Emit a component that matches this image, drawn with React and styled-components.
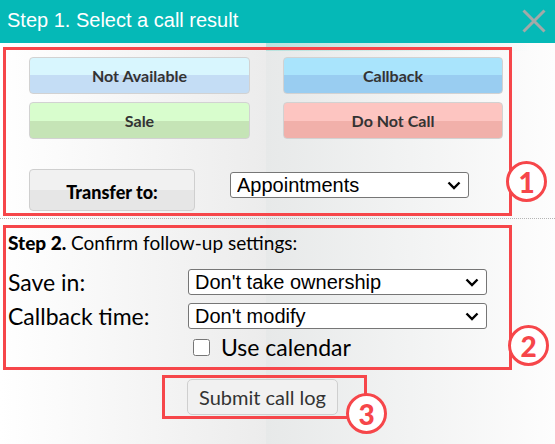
import styled, { createGlobalStyle } from "styled-components";

const Global = createGlobalStyle`
  html, body { margin: 0; padding: 0; }
  body { font-family: "Lato", "Liberation Sans", sans-serif; }
`;

const chevron =
  "url(\"data:image/svg+xml;utf8,<svg xmlns='http://www.w3.org/2000/svg' width='14' height='9' viewBox='0 0 14 9'><path d='M1.5 1.5 L7 7 L12.5 1.5' fill='none' stroke='black' stroke-width='2.4'/></svg>\")";

const Page = styled.div`
  width: 555px;
  height: 444px;
  overflow: hidden;
  background:
    linear-gradient(to right, rgba(180, 226, 222, 0) 0, rgba(180, 226, 222, 0) 266px, rgba(180, 226, 222, 0.9) 266px, rgba(200, 236, 232, 0.5) 420px, rgba(255, 255, 255, 0) 530px) 0 43px / 555px 8px no-repeat,
    linear-gradient(to right, #ffffff 0, #ececec 266px, #e7e9e9 266px, #fdfdfd 555px);
`;

const Header = styled.div`
  height: 43px;
  background: #05b9b7;
  display: flex;
  align-items: center;
  justify-content: space-between;
  padding: 0 9px 0 7px;
  box-sizing: border-box;
`;

const Title = styled.h1`
  margin: 0;
  font-family: "Liberation Sans", Arial, sans-serif;
  font-weight: normal;
  font-size: 20px;
  color: #fff;
  padding-bottom: 2px;
`;

const Close = styled.button`
  border: 0;
  background: none;
  padding: 0;
  width: 24px;
  height: 24px;
  margin-bottom: 2px;
  display: flex;
`;

const Box = styled.section`
  position: relative;
  margin: ${p => p.$margin};
  width: ${p => p.$width}px;
  height: ${p => (p.$height ? `${p.$height}px` : "auto")};
  border: 3px solid #f6464a;
  box-sizing: border-box;
  padding: ${p => p.$pad};
`;

const Badge = styled.div`
  position: absolute;
  left: ${p => p.$left}px;
  top: ${p => p.$top}px;
  width: 41px;
  height: 41px;
  box-sizing: border-box;
  border: 3px solid #f6464a;
  border-radius: 50%;
  background: #fff;
  color: #f6464a;
  font-family: "Lato", sans-serif;
  font-weight: 900;
  font-size: 28px;
  display: flex;
  align-items: center;
  justify-content: center;
  line-height: 1;
`;

const ButtonGrid = styled.div`
  display: grid;
  grid-template-columns: 221px 220px;
  column-gap: 33px;
  row-gap: 8px;
`;

const ResultButton = styled.button`
  height: 37px;
  border: 1px solid #d2d2d2;
  border-radius: 4px;
  background: linear-gradient(to bottom, ${p => p.$top} 0, ${p => p.$top} 50%, ${p => p.$bottom} 50%, ${p => p.$bottom} 100%);
  font-family: "Lato", sans-serif;
  font-weight: bold;
  font-size: 16px;
  color: #333;
  padding: 0;
`;

const TransferRow = styled.div`
  display: flex;
  align-items: flex-start;
  gap: 35px;
  margin-top: 30px;
`;

const TransferButton = styled.button`
  width: 166px;
  height: 42px;
  border: 1px solid #cfcfcf;
  border-radius: 4px;
  background: linear-gradient(to bottom, #f1f1f1 0, #f1f1f1 50%, #e6e6e6 50%, #e6e6e6 100%);
  font-family: "Lato", sans-serif;
  font-weight: 900;
  font-size: 18px;
  color: #000;
  padding: 3px 0 0;
`;

const Select = styled.select`
  appearance: none;
  width: ${p => p.$width}px;
  height: ${p => p.$height}px;
  margin-top: ${p => p.$mt || 0}px;
  font-family: "Liberation Sans", Arial, sans-serif;
  font-size: 20px;
  color: #000;
  background: #fff ${chevron} no-repeat right 7px center / 14px 9px;
  border: 1px solid #767676;
  border-radius: 3px;
  padding: 0 24px 0 6px;
`;

const Separator = styled.hr`
  margin: 2px 0 6px;
  border: 0;
  border-top: 1px dotted #b4b4b4;
  height: 0;
`;

const StepLine = styled.p`
  margin: 0;
  font-size: 19px;
  line-height: 22px;
  color: #000;
  b { font-weight: 900; }
`;

const FieldRow = styled.div`
  display: grid;
  grid-template-columns: 180px 299px;
  align-items: center;
  margin-top: ${p => p.$mt}px;
`;

const Label = styled.label`
  font-size: 23px;
  line-height: 26px;
  color: #000;
`;

const CheckRow = styled.label`
  display: flex;
  align-items: center;
  gap: 11px;
  margin: 4px 0 0 185px;
  font-size: 23px;
  line-height: 28px;
  color: #000;

  input {
    width: 17px;
    height: 17px;
    margin: 0;
  }
`;

const SubmitButton = styled.button`
  width: 151px;
  height: 36px;
  border: 1px solid #cfcfcf;
  border-radius: 5px;
  background: #f1f1f1;
  font-family: "Lato", sans-serif;
  font-size: 20px;
  color: #333;
  padding: 0;
`;

const results = [
  { label: "Not Available", top: "#d8f6fe", bottom: "#c4ddf5" },
  { label: "Callback", top: "#a9e4fc", bottom: "#99cdf1" },
  { label: "Sale", top: "#d8fdcd", bottom: "#c5e4b6" },
  { label: "Do Not Call", top: "#fdc5c1", bottom: "#f1b0aa" },
];

export default function App() {
  return (
    <Page>
      <Global />
      <Header>
        <Title>Step 1. Select a call result</Title>
        <Close aria-label="Close">
          <svg width="24" height="24" viewBox="0 0 24 24">
            <path d="M1.5 1.5 L22.5 22.5 M22.5 1.5 L1.5 22.5" stroke="#a2a9a8" strokeWidth="3" />
          </svg>
        </Close>
      </Header>

      <Box $margin="4px 0 0 3px" $width={509} $pad="7px 6px 2px 23px">
        <ButtonGrid>
          {results.map(r => (
            <ResultButton key={r.label} $top={r.top} $bottom={r.bottom}>
              {r.label}
            </ResultButton>
          ))}
        </ButtonGrid>
        <TransferRow>
          <TransferButton>Transfer to:</TransferButton>
          <Select $width={239} $height={26} $mt={3} defaultValue="Appointments">
            <option>Appointments</option>
          </Select>
        </TransferRow>
        <Badge $left={500} $top={111}>1</Badge>
      </Box>

      <Separator />

      <Box $margin="0 0 0 3px" $width={509} $height={145} $pad="4px 4px 0 2px">
        <StepLine><b>Step 2.</b> Confirm follow-up settings:</StepLine>
        <FieldRow $mt={15}>
          <Label>Save in:</Label>
          <Select $width={299} $height={26} defaultValue="own">
            <option value="own">Don't take ownership</option>
          </Select>
        </FieldRow>
        <FieldRow $mt={8}>
          <Label>Callback time:</Label>
          <Select $width={299} $height={26} defaultValue="mod">
            <option value="mod">Don't modify</option>
          </Select>
        </FieldRow>
        <CheckRow>
          <input type="checkbox" />
          Use calendar
        </CheckRow>
        <Badge $left={502} $top={97}>2</Badge>
      </Box>

      <Box $margin="5px 0 0 162px" $width={205} $height={44} $pad="1px 0 0 22px">
        <SubmitButton>Submit call log</SubmitButton>
        <Badge $left={181} $top={15}>3</Badge>
      </Box>
    </Page>
  );
}
